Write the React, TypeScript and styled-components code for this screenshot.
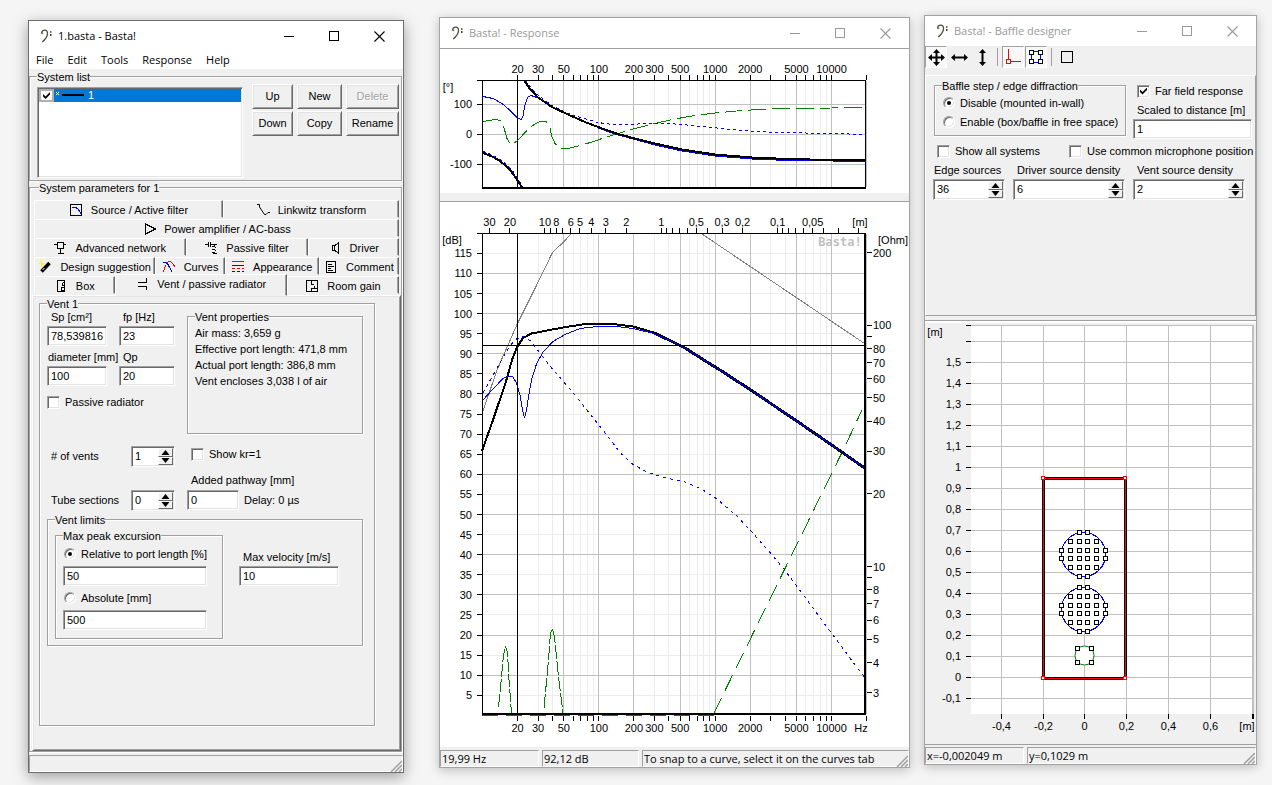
import React, { useId } from "react";
import styled, { createGlobalStyle, css } from "styled-components";

const face = "#f0f0f0";
const shade = "#a0a0a0";
const dark = "#696969";
const light = "#e3e3e3";
const uiFont = '"Liberation Sans", Arial, sans-serif';
const captionFont = '"Open Sans", "Segoe UI", sans-serif';

const Global = createGlobalStyle`
  * { box-sizing: border-box; }
  body { margin: 0; background: #f5f5f5; font: 11px/13px ${uiFont}; color: #000; }
  button, input { font: inherit; color: inherit; }
`;

const sunken = css`
  border: 1px solid;
  border-color: ${shade} #fff #fff ${shade};
  box-shadow: inset 1px 1px 0 ${dark}, inset -1px -1px 0 ${light};
`;
const raised = css`
  border: 1px solid;
  border-color: #fff ${dark} ${dark} #fff;
  box-shadow: inset 1px 1px 0 ${light}, inset -1px -1px 0 ${shade};
`;

/* ---------- window frame ---------- */

const Desktop = styled.main`
  display: flex;
  align-items: flex-start;
  padding: 15px 15px 12px 28px;
`;

const Frame = styled.section<{ $grow: number; $min: number; $top: number; $left: number; $height: number; $active?: boolean }>`
  flex: ${(p) => p.$grow} 1 0;
  min-width: ${(p) => p.$min}px;
  min-height: ${(p) => p.$height}px;
  margin: ${(p) => p.$top}px 0 0 ${(p) => p.$left}px;
  display: flex;
  flex-direction: column;
  background: ${face};
  border: 1px solid ${(p) => (p.$active ? "#6e6e6e" : "#a3a3a3")};
  box-shadow: ${(p) => (p.$active ? "0 4px 14px rgba(0,0,0,.36)" : "0 2px 10px rgba(0,0,0,.24)")};
`;

const TitleBar = styled.header<{ $active?: boolean }>`
  display: flex;
  align-items: center;
  height: 30px;
  padding-right: 1px;
  background: #fff;
  color: ${(p) => (p.$active ? "#000" : "#999")};
  svg { flex: none; }
`;
const TitleIcon = styled.span`
  display: flex;
  width: 29px;
  padding-left: 11px;
`;
const Title = styled.h1`
  flex: 1;
  margin: 0;
  font: 400 11px/16px ${captionFont};
`;
const CaptionButton = styled.button`
  width: 45px;
  height: 30px;
  padding: 0;
  border: 0;
  background: none;
  display: flex;
  align-items: center;
  justify-content: center;
`;

function Caption({ title, active }: { title: string; active?: boolean }) {
  return (
    <TitleBar $active={active}>
      <TitleIcon>
        <svg width="14" height="14" viewBox="0 0 14 14" fill="none">
          <path d="M1.500 4.500C1.500 2.400 3 1.200 4.700 1.200c2 0 3 1.500 2.800 3.700C7.200 8.200 5.300 10.600 2.200 13" stroke="#4a4f40" strokeWidth="1.300" />
          <circle cx="2.300" cy="4.300" r="1" fill="#6d7a5c" />
          <rect x="10" y="2" width="1.500" height="2" fill="#6d7a3c" />
          <rect x="10" y="5" width="1.500" height="2" fill="#3c4034" />
        </svg>
      </TitleIcon>
      <Title>{title}</Title>
      <CaptionButton aria-label="Minimize">
        <svg width="11" height="11"><path d="M0 5.500H10" stroke="currentColor" shapeRendering="crispEdges" /></svg>
      </CaptionButton>
      <CaptionButton aria-label="Maximize">
        <svg width="11" height="11"><rect x=".5" y=".5" width="9" height="9" fill="none" stroke="currentColor" shapeRendering="crispEdges" /></svg>
      </CaptionButton>
      <CaptionButton aria-label="Close">
        <svg width="11" height="11"><path d="M.5 .5L10.500 10.500M10.500 .5L.5 10.500" stroke="currentColor" strokeWidth="1.100" /></svg>
      </CaptionButton>
    </TitleBar>
  );
}

const StatusBar = styled.footer<{ $line?: boolean }>`
  display: flex;
  gap: 3px;
  height: 20px;
  padding-top: ${(p) => (p.$line ? 2 : 3)}px;
  border-top: ${(p) => (p.$line ? `1px solid ${shade}` : "0")};
  position: relative;
  font: 11px/15px ${captionFont};
`;
const StatusCell = styled.div<{ $width?: number }>`
  ${(p) => (p.$width ? `width: ${p.$width}px;` : "flex: 1;")}
  padding-left: 1px;
  white-space: nowrap;
  border: 1px solid;
  border-color: ${shade} #fff #fff ${shade};
`;
const GripBox = styled.svg`
  position: absolute;
  right: 1px;
  bottom: 0;
`;
const Grip = () => (
  <GripBox width="12" height="12">
    <path d="M1 12L12 1M5 12L12 5M9 12L12 9" stroke={shade} strokeWidth="1.500" />
  </GripBox>
);

/* ---------- controls ---------- */

const Group = styled.fieldset`
  min-width: 0;
  margin: 0;
  padding: 0;
  border: 1px solid ${shade};
  box-shadow: 1px 1px 0 #fff, inset 1px 1px 0 #fff;
`;
const Legend = styled.legend`
  margin-left: 7px;
  padding: 0;
  height: 13px;
  line-height: 15px;
  background: ${face};
  white-space: nowrap;
`;

const PushButton = styled.button`
  height: 25px;
  padding: 0;
  background: ${face};
  ${raised}
  &:disabled { color: ${shade}; text-shadow: 1px 1px 0 #fff; }
`;

const TextInput = styled.input<{ $width?: number }>`
  display: block;
  width: ${(p) => (p.$width ? `${p.$width}px` : "100%")};
  height: 20px;
  padding: 0 3px;
  outline: 0;
  border-radius: 0;
  background: #fff;
  ${sunken}
`;

const Tick = styled.input.attrs({ type: "checkbox" })`
  appearance: none;
  position: relative;
  flex: none;
  width: 13px;
  height: 13px;
  margin: 0;
  background: #fff;
  ${sunken}
  &:checked::after {
    content: "";
    position: absolute;
    inset: 2px;
    background: #000;
    clip-path: polygon(0 28%, 36% 64%, 100% 0, 100% 36%, 36% 100%, 0 64%);
  }
`;
const Dot = styled.input.attrs({ type: "radio" })`
  appearance: none;
  position: relative;
  flex: none;
  width: 12px;
  height: 12px;
  margin: 0;
  border-radius: 50%;
  background: #fff;
  ${sunken}
  &:checked::after {
    content: "";
    position: absolute;
    inset: 3px;
    border-radius: 50%;
    background: #000;
  }
`;
const Choice = styled.label<{ $height?: number }>`
  display: flex;
  align-items: center;
  gap: 5px;
  height: ${(p) => p.$height ?? 16}px;
  white-space: nowrap;
`;

const SpinBox = styled.div<{ $width: number }>`
  display: flex;
  width: ${(p) => p.$width}px;
  height: 21px;
  padding: 1px;
  background: #fff;
  ${sunken}
`;
const SpinInput = styled.input`
  flex: 1;
  min-width: 0;
  padding: 0 2px;
  border: 0;
  outline: 0;
  background: transparent;
`;
const SpinKeys = styled.span`
  display: grid;
  grid-template-rows: 1fr 1fr;
  width: 15px;
`;
const SpinKey = styled.button`
  display: flex;
  align-items: center;
  justify-content: center;
  padding: 0;
  background: ${face};
  border: 1px solid;
  border-color: #fff ${dark} ${dark} #fff;
`;
function Spin({ id, width, value }: { id: string; width: number; value: string }) {
  return (
    <SpinBox $width={width}>
      <SpinInput id={id} defaultValue={value} />
      <SpinKeys>
        <SpinKey aria-label="Increase"><svg width="9" height="5"><path d="M.5 5L4.500 0L8.500 5Z" /></svg></SpinKey>
        <SpinKey aria-label="Decrease"><svg width="9" height="5"><path d="M.5 0L4.500 5L8.500 0Z" /></svg></SpinKey>
      </SpinKeys>
    </SpinBox>
  );
}

const FieldLabel = styled.label<{ $indent?: number }>`
  display: block;
  height: 16px;
  padding-left: ${(p) => p.$indent ?? 4}px;
  line-height: 14px;
  white-space: nowrap;
`;
function Field({ label, value, width, indent }: { label: string; value: string; width?: number; indent?: number }) {
  const id = useId();
  return (
    <div>
      <FieldLabel htmlFor={id} $indent={indent}>{label}</FieldLabel>
      <TextInput id={id} defaultValue={value} $width={width} />
    </div>
  );
}
function SpinField({ label, value, width, indent }: { label: string; value: string; width: number; indent?: number }) {
  const id = useId();
  return (
    <div>
      <FieldLabel htmlFor={id} $indent={indent}>{label}</FieldLabel>
      <Spin id={id} value={value} width={width} />
    </div>
  );
}

/* ---------- main window ---------- */

const Menu = styled.nav`
  display: flex;
  gap: 14px;
  height: 18px;
  padding-left: 7px;
  background: #fff;
`;
const MenuItem = styled.button`
  padding: 0;
  border: 0;
  background: none;
  font: 11px/18px ${captionFont};
`;
const MainBody = styled.div`
  flex: 1;
  display: flex;
  flex-direction: column;
  padding: 1px 1px 0 0;
`;
const SystemGroup = styled(Group)`
  height: 111px;
`;
const SystemRow = styled.div`
  display: flex;
  gap: 9px;
  padding: 1px 2px 0 7px;
`;
const SystemList = styled.ul`
  flex: 1;
  height: 91px;
  margin: 3px 0 0;
  padding: 1px;
  list-style: none;
  background: #fff;
  ${sunken}
`;
const SystemItem = styled.li`
  display: flex;
  height: 13px;
`;
const ListCheck = styled(Tick)`
  width: 15px;
  height: 13px;
  box-shadow: none;
  border: 2px solid #b0b0b0;
  &:checked::after { inset: 1px 2px; }
`;
const SystemName = styled.span`
  flex: 1;
  display: flex;
  align-items: center;
  gap: 4px;
  padding-left: 2px;
  background: #0078d7;
  color: #fff;
`;
const ButtonGrid = styled.div`
  display: grid;
  grid-template-columns: 41px 45px 53px;
  gap: 2px 4px;
  align-content: start;
`;
const ParamGroup = styled(Group)`
  padding: 6px 0 0 2px;
`;
const TabRow = styled.div`
  display: flex;
  height: 19px;
  margin: 0 2px;
`;
const Tab = styled.button<{ $w: number; $on?: boolean }>`
  flex: ${(p) => p.$w} 1 0;
  min-width: 0;
  display: flex;
  align-items: center;
  justify-content: center;
  gap: 6px;
  height: ${(p) => (p.$on ? 22 : 18)}px;
  margin-top: ${(p) => (p.$on ? -2 : 0)}px;
  padding: 2px 0 ${(p) => (p.$on ? 4 : 0)}px;
  background: ${face};
  border: 1px solid;
  border-color: #fff ${dark} transparent #fff;
  box-shadow: inset -1px 0 0 ${shade};
  line-height: 14px;
  white-space: nowrap;
  z-index: ${(p) => (p.$on ? 1 : 0)};
  svg { flex: none; }
`;
const TabPanel = styled.div`
  min-height: 456px;
  padding: 1px 6px 0;
  border: 1px solid;
  border-color: #fff ${dark} ${dark} #fff;
  box-shadow: inset 1px 1px 0 ${light}, inset -1px -1px 0 ${shade};
`;
const VentGroup = styled(Group)`
  width: 336px;
  max-width: 100%;
  min-height: 429px;
`;
const VentBody = styled.div`
  padding: 0 11px 0 7px;
`;
const VentTop = styled.div`
  display: flex;
`;
const VentFields = styled.div`
  display: grid;
  grid-template-columns: 60px 56px;
  gap: 4px 12px;
  align-content: start;
  width: 140px;
`;
const WideChoice = styled(Choice)`
  grid-column: 1 / -1;
  margin-top: 4px;
`;
const Properties = styled(Group)`
  flex: 1;
  height: 124px;
`;
const PropertyList = styled.ul`
  margin: 0;
  padding: 2px 7px 0;
  list-style: none;
  line-height: 16px;
  white-space: nowrap;
`;
const Sections = styled.div`
  display: grid;
  grid-template-columns: 84px 56px 1fr;
  grid-template-rows: 21px 23px 21px;
  margin: 12px 0 2px;
  line-height: 21px;
`;
const SectionLabel = styled.label`
  padding-left: 4px;
`;
const SectionOption = styled.div`
  padding-left: 4px;
`;
const PathLabel = styled.label`
  grid-column: 3;
  padding: 3px 0 0 4px;
`;
const Delay = styled.div`
  display: flex;
  gap: 5px;
`;
const Limits = styled(Group)`
  height: 133px;
`;
const LimitsRow = styled.div`
  display: flex;
  gap: 16px;
  padding: 3px 0 0 7px;
`;
const PeakGroup = styled(Group)`
  width: 168px;
  height: 110px;
`;
const PeakStack = styled.div`
  display: flex;
  flex-direction: column;
  gap: 2px;
  padding: 2px 15px 0 7px;
`;
const PeakChoice = styled(Choice)`
  padding-left: 1px;
`;
const Velocity = styled.div`
  padding-top: 21px;
`;

const TabIcon = ({ children }: { children: React.ReactNode }) => (
  <svg width="16" height="14" viewBox="0 0 16 14" fill="none" stroke="#000" shapeRendering="crispEdges">{children}</svg>
);

const icons = {
  source: (<TabIcon><rect x="1.500" y="1.500" width="11" height="11" /><path d="M3 4.500H7L9.500 6.500L12 11" stroke="#00f" /></TabIcon>),
  linkwitz: (<TabIcon><path d="M1 1.500H3.500V4L8.500 11.500H10L12 9.500H14" shapeRendering="auto" /></TabIcon>),
  amp: (<TabIcon><path d="M3.500 2V12L13.500 7Z" /></TabIcon>),
  network: (<TabIcon><path d="M0 3.500H3M9 3.500H12M3.500 1.500H9.500V7.500H3.500ZM6.500 7.500V12M3.500 12.500H10" /></TabIcon>),
  passive: (<TabIcon><path d="M1 3.500H4M4.500 1V6M6.500 1V6M7 3.500H13M10.500 3.500V5M8 5.500H11M11.500 6V7M8 8.500H11M11.500 9V10M8 11.500H11M9 12.500H13" /></TabIcon>),
  driver: (<TabIcon><path d="M4.500 4.500H6.500V9.500H4.500ZM7 4.500L10.500 1.500V12.500L7 9.500" /></TabIcon>),
  design: (<TabIcon><path d="M3.500 0V7M1 3.500H7M2 1L6 6" stroke="#ff0" /><path d="M3.500 11.500L11.500 3" strokeWidth="3.500" shapeRendering="auto" /><path d="M4.500 10L6.500 8" stroke="#fff" shapeRendering="auto" /></TabIcon>),
  curves: (<TabIcon><path d="M4 4Q5 1.500 7 1.500T10.500 3.500L13 7" stroke="#f00" /><path d="M1 12L4 5" stroke="#f00" /><path d="M1 2.500H4L6 4.500L10 12" stroke="#00f" /></TabIcon>),
  appearance: (<TabIcon><path d="M1 1.500H13" stroke="#f00" /><path d="M1 5.500H13" stroke="#00f" /><path d="M1 8.500H13" stroke="#f00" strokeDasharray="3 2" /><path d="M1 11.500H13" stroke="#00f" strokeDasharray="3 2" /></TabIcon>),
  comment: (<TabIcon><rect x="2.500" y="1.500" width="9" height="11" /><path d="M4 4.500H8M4 6.500H10M4 8.500H7M4 10.500H9" /></TabIcon>),
  box: (<TabIcon><path d="M3.500 1.500H10.500V12.500H3.500Z" /><path d="M10.500 3L8.500 4.500V6.500L10.500 7M10.500 8L7.500 8.500V11.500L10.500 11.500" /></TabIcon>),
  vent: (<TabIcon><path d="M3 5.500H11.500V1M3 9.500H11.500V13" /></TabIcon>),
  room: (<TabIcon><path d="M1.500 1.500H12.500V12.500H1.500ZM6.500 1.500V6M6.500 9V12.500M6.500 5.500H9M6.500 9.500H12M9.500 7V9" /></TabIcon>),
};

const tabRows: { name: string; icon: keyof typeof icons; w: number; on?: boolean }[][] = [
  [{ name: "Source / Active filter", icon: "source", w: 189 }, { name: "Linkwitz transform", icon: "linkwitz", w: 176 }],
  [{ name: "Power amplifier / AC-bass", icon: "amp", w: 365 }],
  [{ name: "Advanced network", icon: "network", w: 152 }, { name: "Passive filter", icon: "passive", w: 122 }, { name: "Driver", icon: "driver", w: 91 }],
  [{ name: "Design suggestion", icon: "design", w: 122 }, { name: "Curves", icon: "curves", w: 69 }, { name: "Appearance", icon: "appearance", w: 94 }, { name: "Comment", icon: "comment", w: 80 }],
  [{ name: "Box", icon: "box", w: 80 }, { name: "Vent / passive radiator", icon: "vent", w: 173, on: true }, { name: "Room gain", icon: "room", w: 112 }],
];

function VentPage() {
  const vents = useId();
  const tubes = useId();
  const path = useId();
  return (
    <VentGroup>
      <Legend>Vent 1</Legend>
      <VentBody>
        <VentTop>
          <VentFields>
            <Field label="Sp [cm²]" value="78,539816" />
            <Field label="fp [Hz]" value="23" />
            <Field label="diameter [mm]" value="100" indent={1} />
            <Field label="Qp" value="20" />
            <WideChoice><Tick />Passive radiator</WideChoice>
          </VentFields>
          <Properties>
            <Legend>Vent properties</Legend>
            <PropertyList>
              <li>Air mass: 3,659 g</li>
              <li>Effective port length: 471,8 mm</li>
              <li>Actual port length: 386,8 mm</li>
              <li>Vent encloses 3,038 l of air</li>
            </PropertyList>
          </Properties>
        </VentTop>
        <Sections>
          <SectionLabel htmlFor={vents}># of vents</SectionLabel>
          <Spin id={vents} width={44} value="1" />
          <SectionOption><Choice><Tick />Show kr=1</Choice></SectionOption>
          <PathLabel htmlFor={path}>Added pathway [mm]</PathLabel>
          <SectionLabel htmlFor={tubes}>Tube sections</SectionLabel>
          <Spin id={tubes} width={44} value="0" />
          <Delay>
            <TextInput id={path} $width={52} defaultValue="0" />
            Delay: 0 µs
          </Delay>
        </Sections>
        <Limits>
          <Legend>Vent limits</Legend>
          <LimitsRow>
            <PeakGroup>
              <Legend>Max peak excursion</Legend>
              <PeakStack>
                <PeakChoice $height={20}><Dot name="peak" defaultChecked />Relative to port length [%]</PeakChoice>
                <TextInput aria-label="Relative to port length" defaultValue="50" />
                <PeakChoice $height={20}><Dot name="peak" />Absolute [mm]</PeakChoice>
                <TextInput aria-label="Absolute" defaultValue="500" />
              </PeakStack>
            </PeakGroup>
            <Velocity><Field label="Max velocity [m/s]" value="10" width={100} /></Velocity>
          </LimitsRow>
        </Limits>
      </VentBody>
    </VentGroup>
  );
}

function MainWindow() {
  return (
    <Frame $grow={376} $min={376} $top={5} $left={0} $height={753} $active>
      <Caption title="1.basta - Basta!" active />
      <Menu>
        {["File", "Edit", "Tools", "Response", "Help"].map((m) => <MenuItem key={m}>{m}</MenuItem>)}
      </Menu>
      <MainBody>
        <SystemGroup>
          <Legend>System list</Legend>
          <SystemRow>
            <SystemList>
              <SystemItem>
                <ListCheck defaultChecked aria-label="Show system 1" />
                <SystemName>
                  <svg width="28" height="13" shapeRendering="crispEdges">
                    <path d="M0 3L3 6M3 3L0 6" stroke="#fff" />
                    <rect x="6" y="5" width="22" height="2" />
                  </svg>
                  1
                </SystemName>
              </SystemItem>
            </SystemList>
            <ButtonGrid>
              <PushButton>Up</PushButton>
              <PushButton>New</PushButton>
              <PushButton disabled>Delete</PushButton>
              <PushButton>Down</PushButton>
              <PushButton>Copy</PushButton>
              <PushButton>Rename</PushButton>
            </ButtonGrid>
          </SystemRow>
        </SystemGroup>
        <ParamGroup>
          <Legend>System parameters for 1</Legend>
          {tabRows.map((row, i) => (
            <TabRow key={i} role="tablist">
              {row.map((t) => (
                <Tab key={t.name} role="tab" aria-selected={!!t.on} $w={t.w} $on={t.on}>
                  {icons[t.icon]}
                  {t.name}
                </Tab>
              ))}
            </TabRow>
          ))}
          <TabPanel role="tabpanel"><VentPage /></TabPanel>
        </ParamGroup>
      </MainBody>
      <StatusBar><StatusCell /><Grip /></StatusBar>
    </Frame>
  );
}

/* ---------- response window ---------- */

const Plot = styled.svg<{ $height: number }>`
  display: block;
  width: 100%;
  height: ${(p) => p.$height}px;
  font: 11px ${uiFont};
`;
const ResponsePane = styled.div`
  background: #fff;
  border-top: 1px solid ${shade};
`;
const Splitter = styled.div`
  height: 8px;
`;

const hz = (f: number) => 482.5 + 116.34 * Math.log10(f / 10);
const decades = [10, 100, 1000, 10000];
const freqs = decades.flatMap((d) => [1, 2, 3, 4, 5, 6, 7, 8, 9].map((n) => n * d)).filter((f) => f > 10 && f <= 20000);
const strong = (f: number) => ["1", "2", "5"].includes(String(f)[0]);
const axisFreqs = [20, 30, 50, 100, 200, 300, 500, 1000, 2000, 5000, 10000];
const px = (n: number) => Math.round(n - 0.5) + 0.5;

function FreqGrid({ top, bottom }: { top: number; bottom: number }) {
  const lines = (on: boolean) => freqs.filter((f) => strong(f) === on).map((f) => `M${px(hz(f))} ${top}V${bottom}`).join("");
  return (
    <>
      <path d={lines(false)} stroke="#ececec" />
      <path d={lines(true)} stroke="#c0c0c0" />
    </>
  );
}

function PhasePlot() {
  const black = "M524 80L530 89L538 97.500L552 107L568 114.500L585 122L598 127L618 134L635 138.500L655 143.500L682 149.500L715 154.500L752 157.500L788 159L832 160L866 160.500";
  const low = "M482 152.500L493 157L499 160.500L505 165L512 172.500L522 187";
  return (
    <Plot $height={144} viewBox="440 49 469 144" preserveAspectRatio="xMinYMin" shapeRendering="crispEdges" fill="none" stroke="#000">
      <FreqGrid top={81} bottom={187} />
      <path d="M483 104.500H866M483 134.500H866M483 164.500H866" stroke="#c0c0c0" />
      <path d={freqs.map((f) => `M${px(hz(f))} 75V80`).join("")} />
      <path d="M477 104.500H482M477 134.500H482M477 164.500H482M477 80.500H866M482.500 80V188M865.500 80V188M517.500 80V188" />
      <path d="M482 187.500H866" strokeWidth="2" />
      <g stroke="#008000">
        <path d="M483 121.500L495 119.500L501 120.500L504 128L507 138.500L510.500 144.500L513 144L518 140L527 130.500L534 124.500L540 121.500L546 121.500L550 128L552 137L555 143.500L560 148L568 148.500L578 146L592 142L602 138.500L618 133.500L635 128.500L655 123.500L672 119.500L692 116L715 113L742 110.500L778 108.500L832 108L865 107.500" strokeDasharray="18 6" />
      </g>
      <g stroke="#00f">
        <path d="M483 96.500L493 98.500L502 103.500L509 109.500L517 117.500L521 119.500L523 116L525 105L527.500 97.500L531 95.500L537 97.500L545 102.500L555 109L570 115" />
        <path d="M525 80L531 88L539 96L552 105.500L567 113L582 118L598 122.500L612 124.500L633 124.500L648 123L668 123.500L682 124.500L712 127.500L742 130.500L778 132.500L832 133.500L866 134.500" strokeDasharray="3 3" />
        <path d="M483 151L494 156L500 159.500L506 164L513 171.500L523 186" strokeDasharray="3 3" />
        <path d="M598 128L618 135L635 139.500L655 145L682 151L715 156L752 159L788 160.500L832 161L866 162" />
      </g>
      <path d={black} strokeWidth="2" />
      <path d={low} strokeWidth="2" />
      <g fill="#000" stroke="none" textAnchor="middle">
        {axisFreqs.map((f) => <text key={f} x={hz(f)} y="73">{f}</text>)}
        <text x="448" y="91">[°]</text>
        <g textAnchor="end">
          <text x="472" y="108">100</text>
          <text x="472" y="138">0</text>
          <text x="472" y="168">-100</text>
        </g>
      </g>
    </Plot>
  );
}

const dB = (v: number) => 715.4 - 4.018 * v;
const ohm = (v: number) => 325.3 + (2 - Math.log10(v)) * 241.3;
const metres = (m: number) => hz(344 / m);
const dbSteps = Array.from({ length: 23 }, (_, i) => (i + 1) * 5);
const ohmSteps = [200, 100, 90, 80, 70, 60, 50, 40, 30, 20, 10, 9, 8, 7, 6, 5, 4, 3];
const metreSteps = [30, 20, 10, 9, 8, 7, 6, 5, 4, 3, 2, 1, 0.9, 0.8, 0.7, 0.6, 0.5, 0.4, 0.3, 0.2, 0.1, 0.09, 0.08, 0.07, 0.06, 0.05, 0.04, 0.03, 0.02];
const metreLabels = [30, 20, 10, 8, 6, 5, 4, 3, 2, 1, 0.5, 0.3, 0.2, 0.1, 0.05];

function LevelPlot() {
  const rows = (on: boolean) => dbSteps.filter((v) => (v % 10 === 0) === on).map((v) => `M483 ${px(dB(v))}H866`).join("");
  const slope = "L670 340.500L685 348L703 359.500L720 370L750 389.500L796 420.500L831 444.500L866 469";
  return (
    <Plot $height={545} viewBox="440 202 469 545" preserveAspectRatio="xMinYMin" shapeRendering="crispEdges" fill="none" stroke="#000">
      <path d={rows(false)} stroke="#ececec" />
      <FreqGrid top={234} bottom={714} />
      <path d={rows(true)} stroke="#c0c0c0" />
      <path d={freqs.map((f) => `M${px(hz(f))} 716V721`).join("")} />
      <path d={metreSteps.map((m) => `M${px(metres(m))} 228V233`).join("")} />
      <path d={dbSteps.map((v) => `M477 ${px(dB(v))}H482`).join("")} />
      <path d={ohmSteps.map((v) => `M867 ${px(ohm(v))}H872`).join("")} />
      <g stroke="#808080">
        <path d="M483 411L497 370L517 324.500L535 288.500L552.500 252.500L564 241.500L571 234" />
        <path d="M702 234L866 344.500" />
      </g>
      <g stroke="#008000">
        <path d="M498.500 707L501.500 677L503.500 655L505.500 646L507.500 653L509 680L511.500 713" strokeDasharray="13 2" />
        <path d="M544 708L548.500 660L550.500 633L552.500 629L554.500 637L558.500 677L563 713" strokeDasharray="14 2" />
        <path d="M714 713L784 570.500L827 483L843 450.500L862 410" strokeDasharray="17 8" />
        <path d="M482 715.500H714" strokeDasharray="16 8" />
      </g>
      <path d={`M482 451L493 420L506 381.500L512 360L517 347L523 338L531.500 333.500L547 330.500L563 327.500L582 324.500L598 323.500L617 324.500L633 326.500L652 332${slope}`} strokeWidth="2" />
      <path d={`M652 332${slope}`} strokeWidth="3" />
      <g stroke="#00f">
        <path d={`M483 400L493 389L503 378.500L508 376.500L512.500 376.500L516 382L520 395L522.500 410L524.500 418L526.500 410L528.500 397L531.500 380L536.500 364L543 352L553 341.500L565 334.500L580 328.500L598 326.500L617 326.500L633 328.500L652 333${slope}`} />
        <path d="M483 393L492 377L502 359.500L510 345.500L517 338.500L523 336.500L530 340.500L538 350.500L550 366L563 381L575 395L592 416.500L608 436.500L620 452.500L633 464.500L648 472.500L663 477L673 479.500L687 482.500L702 489.500L715 497.500L737 516L750 530L771 553.500L785 570.500L803 594.500L831 632.500L850 658L865 678" strokeDasharray="3 4" />
      </g>
      <path d="M477 233.500H866M482.500 233V715M517.500 233V714M482 345.500H866" />
      <path d="M482 714H866M865 233V715" strokeWidth="2" />
      <g fill="#000" stroke="none" textAnchor="middle">
        {metreLabels.map((m) => <text key={m} x={metres(m)} y="226">{String(m).replace(".", ",")}</text>)}
        {axisFreqs.map((f) => <text key={f} x={hz(f)} y="732">{f}</text>)}
        <text x="860" y="226">[m]</text>
        <text x="861" y="732">Hz</text>
        <text x="452" y="244">[dB]</text>
        <text x="893" y="244">[Ohm]</text>
        <text x="840" y="246" fill="#c0c0c0" fontFamily="DejaVu Sans Mono, monospace" fontWeight="700" fontSize="12">Basta!</text>
        <g textAnchor="end">
          {dbSteps.map((v) => <text key={v} x="472" y={Math.round(dB(v)) + 4}>{v}</text>)}
        </g>
        <g textAnchor="start">
          {ohmSteps.filter((v) => v !== 90 && v !== 9).map((v) => <text key={v} x="873" y={Math.round(ohm(v)) + 4}>{v}</text>)}
        </g>
      </g>
    </Plot>
  );
}

function ResponseWindow() {
  return (
    <Frame $grow={471} $min={471} $top={2} $left={35} $height={751}>
      <Caption title="Basta! - Response" />
      <ResponsePane><PhasePlot /></ResponsePane>
      <Splitter />
      <ResponsePane><LevelPlot /></ResponsePane>
      <StatusBar>
        <StatusCell $width={99}>19,99 Hz</StatusCell>
        <StatusCell $width={97}>92,12 dB</StatusCell>
        <StatusCell>To snap to a curve, select it on the curves tab</StatusCell>
        <Grip />
      </StatusBar>
    </Frame>
  );
}

/* ---------- baffle window ---------- */

const Toolbar = styled.div`
  display: flex;
  align-items: center;
  gap: 1px;
  height: 22px;
`;
const ToolButton = styled.button<{ $down?: boolean }>`
  display: flex;
  align-items: center;
  justify-content: center;
  width: 22px;
  height: 22px;
  padding: 0;
  border: 1px solid;
  border-color: ${(p) => (p.$down ? `${shade} #fff #fff ${shade}` : "transparent")};
  background: ${(p) => (p.$down ? "#f8f8f8" : "none")};
`;
const ToolRule = styled.span`
  width: 1px;
  height: 18px;
  margin: 0 3px;
  background: ${shade};
`;
const BafflePanel = styled.div`
  height: 241px;
  margin-top: 7px;
  padding: 3px 3px 0 7px;
  border: 1px solid;
  border-color: #fff ${shade} ${shade} #fff;
`;
const BaffleRow = styled.div`
  display: flex;
`;
const StepGroup = styled(Group)`
  width: 192px;
  height: 57px;
  margin: 0 7px 0 1px;
`;
const StepStack = styled.div`
  display: flex;
  flex-direction: column;
  gap: 3px;
  padding: 3px 0 0 8px;
`;
const FarField = styled.div`
  flex: 1;
  padding-top: 4px;
`;
const FarChoice = styled(Choice)`
  margin: 0 0 4px 4px;
`;
const ChoiceRow = styled.div`
  display: grid;
  grid-template-columns: 132px 1fr;
  padding: 4px 0 4px 4px;
`;
const SpinRow = styled.div`
  display: flex;
  gap: 8px;
`;
const BaffleStrip = styled.div`
  height: 3px;
  margin-top: 4px;
  border-top: 1px solid ${shade};
  background: #fff;
`;

const baffleLevels = Array.from({ length: 17 }, (_, i) => ({ v: 15 - i, y: 362.5 + i * 21 }));
const baffleCols = [1001.5, 1043.5, 1084.5, 1126.5, 1168.5, 1210.5];
const spots = [1061, 1070, 1079, 1087, 1096, 1105];
const driverRows = [[2, 3], [1, 2, 3, 4], [0, 1, 2, 3, 4, 5], [0, 1, 2, 3, 4, 5], [1, 2, 3, 4], [2, 3]];
const square = (x: number, y: number) => <rect key={`${x}-${y}`} x={x - 1.5} y={y - 1.5} width="4" height="4" fill="#fff" />;

function Driver({ cy }: { cy: number }) {
  return (
    <>
      <circle cx="1083.500" cy={cy + 0.5} r="22" stroke="#00f" fill="#fff" />
      {driverRows.map((cols, r) => cols.map((c) => square(spots[c], cy + spots[r] - 1083)))}
    </>
  );
}

function BafflePlot() {
  return (
    <Plot $height={421} viewBox="925 323 331 421" preserveAspectRatio="xMinYMin" shapeRendering="crispEdges" fill="none" stroke="#000">
      <rect x="971" y="325" width="282" height="389" fill="#fff" stroke="none" />
      <g stroke="#c0c0c0">
        <path d={"M971 325.500H1253M971 341.500H1253" + baffleLevels.map((l) => `M971 ${l.y}H1253`).join("")} />
        <path d={baffleCols.map((x) => `M${x} 325V714`).join("")} />
        <path d="M1253 325V714" strokeWidth="2" />
      </g>
      <path d={"M966 325.500H971M966 341.500H971" + baffleLevels.map((l) => `M966 ${l.y}H971`).join("")} />
      <path d={baffleCols.map((x) => `M${x} 714V719`).join("")} />
      <path d="M1253 714V719" strokeWidth="2" />
      <path d="M1043.500 478V678M1125.500 478V678M1043 478.500H1126M1043 678.500H1126" strokeWidth="3" />
      <path d="M1043.500 478V678M1125.500 478V678M1043 478.500H1126M1043 678.500H1126" stroke="#f00" />
      <g stroke="#f00">
        {[1043, 1125].map((x) => [478, 678].map((y) => <rect key={`${x}-${y}`} x={x - 1.5} y={y - 1.5} width="3" height="3" fill="#fff" />))}
      </g>
      <Driver cy={554} />
      <Driver cy={609} />
      <circle cx="1084.500" cy="655.500" r="9.500" stroke="#008000" fill="#fff" shapeRendering="auto" />
      {[1077, 1091].map((x) => [648, 662].map((y) => square(x, y)))}
      <g fill="#000" stroke="none" textAnchor="middle">
        {["-0,4", "-0,2", "0", "0,2", "0,4", "0,6"].map((t, i) => <text key={t} x={baffleCols[i]} y="730">{t}</text>)}
        <text x="1247" y="730">[m]</text>
        <text x="935" y="336">[m]</text>
        <g textAnchor="end">
          {baffleLevels.map((l) => <text key={l.v} x="961" y={l.y + 3.5}>{String(l.v / 10).replace(".", ",")}</text>)}
        </g>
      </g>
    </Plot>
  );
}

function BaffleWindow() {
  return (
    <Frame $grow={333} $min={333} $top={0} $left={14} $height={750}>
      <Caption title="Basta! - Baffle designer" />
      <Toolbar role="toolbar">
        <ToolButton $down aria-label="Move">
          <svg width="17" height="17"><path d="M2 8.500H15M8.500 2V15" stroke="#000" strokeWidth="2" /><path d="M0 8.500L4 5V12ZM17 8.500L13 5V12ZM8.500 0L5 4H12ZM8.500 17L5 13H12Z" /></svg>
        </ToolButton>
        <ToolButton aria-label="Move horizontally">
          <svg width="17" height="17"><path d="M2 8.500H15" stroke="#000" strokeWidth="2" /><path d="M0 8.500L4 5V12ZM17 8.500L13 5V12Z" /></svg>
        </ToolButton>
        <ToolButton aria-label="Move vertically">
          <svg width="17" height="17"><path d="M8.500 2V15" stroke="#000" strokeWidth="2" /><path d="M8.500 0L5 4H12ZM8.500 17L5 13H12Z" /></svg>
        </ToolButton>
        <ToolRule />
        <ToolButton $down aria-label="Snap to origin">
          <svg width="18" height="18" fill="none" stroke="#f00" shapeRendering="crispEdges"><path d="M4.500 1V11M7 13.500H17" /><rect x="2.500" y="11.500" width="4" height="4" /></svg>
        </ToolButton>
        <ToolButton $down aria-label="Show sources">
          <svg width="18" height="18" fill="none" stroke="#000" shapeRendering="crispEdges">
            <path d="M7 3.500H12M7 14.500H12M4.500 6V12M13.500 6V12" stroke="#00f" />
            <rect x="2.500" y="2.500" width="4" height="4" /><rect x="11.500" y="2.500" width="4" height="4" />
            <rect x="2.500" y="11.500" width="4" height="4" /><rect x="11.500" y="11.500" width="4" height="4" />
          </svg>
        </ToolButton>
        <ToolRule />
        <ToolButton aria-label="Box">
          <svg width="12" height="12"><rect x=".5" y=".5" width="11" height="11" fill="none" stroke="#000" /></svg>
        </ToolButton>
      </Toolbar>
      <BafflePanel>
        <BaffleRow>
          <StepGroup>
            <Legend>Baffle step / edge diffraction</Legend>
            <StepStack>
              <Choice><Dot name="step" defaultChecked />Disable (mounted in-wall)</Choice>
              <Choice><Dot name="step" />Enable (box/baffle in free space)</Choice>
            </StepStack>
          </StepGroup>
          <FarField>
            <FarChoice><Tick defaultChecked />Far field response</FarChoice>
            <Field label="Scaled to distance [m]" value="1" />
          </FarField>
        </BaffleRow>
        <ChoiceRow>
          <Choice><Tick />Show all systems</Choice>
          <Choice><Tick />Use common microphone position</Choice>
        </ChoiceRow>
        <SpinRow>
          <SpinField label="Edge sources" value="36" width={72} indent={1} />
          <SpinField label="Driver source density" value="6" width={112} />
          <SpinField label="Vent source density" value="2" width={112} />
        </SpinRow>
      </BafflePanel>
      <BaffleStrip />
      <BafflePlot />
      <StatusBar $line>
        <StatusCell $width={99}>x=-0,002049 m</StatusCell>
        <StatusCell>y=0,1029 m</StatusCell>
        <Grip />
      </StatusBar>
    </Frame>
  );
}

export default function App() {
  return (
    <Desktop>
      <Global />
      <MainWindow />
      <ResponseWindow />
      <BaffleWindow />
    </Desktop>
  );
}
